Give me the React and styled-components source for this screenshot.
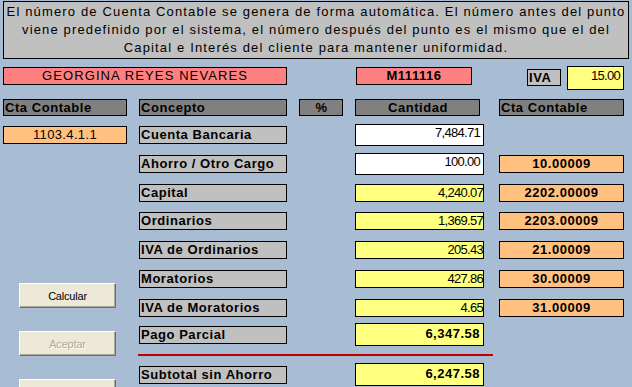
import React from "react";
import styled, { createGlobalStyle, css } from "styled-components";

const rows = [
  { concept: "Cuenta Bancaria", amount: "7,484.71", tone: "white", kind: "edit", left: "1103.4.1.1" },
  { concept: "Ahorro / Otro Cargo", amount: "100.00", tone: "white", kind: "edit", account: "10.00009" },
  { concept: "Capital", amount: "4,240.07", account: "2202.00009" },
  { concept: "Ordinarios", amount: "1,369.57", account: "2203.00009" },
  { concept: "IVA de Ordinarios", amount: "205.43", account: "21.00009" },
  { concept: "Moratorios", amount: "427.86", account: "30.00009" },
  { concept: "IVA de Moratorios", amount: "4.65", account: "31.00009" },
  { concept: "Pago Parcial", amount: "6,347.58", kind: "total" },
];

function App() {
  return (
    <>
      <GlobalStyle />
      <Page>
        <Notice>
          El número de Cuenta Contable se genera de forma automática. El número antes del punto
          <br />
          viene predefinido por el sistema, el número después del punto es el mismo que el del
          <br />
          Capital e Interés del cliente para mantener uniformidad.
        </Notice>

        <Form>
          <NameField>GEORGINA REYES NEVARES</NameField>
          <CodeField>M111116</CodeField>
          <IvaGroup>
            <IvaLabel>IVA</IvaLabel>
            <IvaInput>15.00</IvaInput>
          </IvaGroup>

          <HeaderCell $col={1}>Cta Contable</HeaderCell>
          <HeaderCell $col={2}>Concepto</HeaderCell>
          <HeaderCell $col={3} $center>%</HeaderCell>
          <HeaderCell $col={4} $center $narrow>Cantidad</HeaderCell>
          <HeaderCell $col={5}>Cta Contable</HeaderCell>

          {rows.map((r, i) => (
            <React.Fragment key={r.concept}>
              {r.left && (
                <AccountCell $row={i + 3} $col={1}>
                  {r.left}
                </AccountCell>
              )}
              <ConceptLabel $row={i + 3}>{r.concept}</ConceptLabel>
              <AmountField $row={i + 3} $tone={r.tone} $kind={r.kind}>
                {r.amount}
              </AmountField>
              {r.account && (
                <AccountCell $row={i + 3} $col={5} $bold>
                  {r.account}
                </AccountCell>
              )}
            </React.Fragment>
          ))}

          <Divider />

          <ConceptLabel $row={12}>Subtotal sin Ahorro</ConceptLabel>
          <AmountField $row={12} $kind="total">
            6,247.58
          </AmountField>

          <ButtonStack>
            <Button>Calcular</Button>
            <Button disabled>Aceptar</Button>
            <Button>Cancelar</Button>
          </ButtonStack>
        </Form>
      </Page>
    </>
  );
}

const GlobalStyle = createGlobalStyle`
  html, body {
    margin: 0;
    background: #a8bcd4;
    overflow: hidden;
  }
  body {
    font-family: "Liberation Sans", Arial, sans-serif;
    color: #000;
  }
`;

const Page = styled.div`
  height: 387px;
  box-sizing: border-box;
  padding: 1px 3px 0;
  overflow: hidden;
`;

const Notice = styled.div`
  height: 55px;
  border: 1px solid #000;
  background: #c0c0c0;
  padding-top: 1px;
  text-align: center;
  white-space: nowrap;
  font-size: 13px;
  line-height: 18px;
  letter-spacing: 1.15px;
`;

const Form = styled.div`
  display: grid;
  grid-template-columns: 124px 148px 44px 132px 125px;
  grid-template-rows: 33px 27px 29px 29px 28px 29px 29px 29px 27px 28px 12px auto;
  column-gap: 12px;
  align-items: start;
  margin-top: 7px;
`;

const field = css`
  box-sizing: border-box;
  border: 1px solid #000;
  height: 18px;
  line-height: 16px;
  font-size: 13px;
  white-space: nowrap;
  overflow: hidden;
`;

const NameField = styled.div`
  ${field};
  grid-row: 1;
  grid-column: 1 / 3;
  margin-top: 1px;
  background: #ff8080;
  text-align: center;
  letter-spacing: 1.1px;
`;

const CodeField = styled.div`
  ${field};
  grid-row: 1;
  grid-column: 4;
  width: 116px;
  margin: 1px 0 0 1px;
  background: #ff8080;
  text-align: center;
  font-weight: bold;
  letter-spacing: 0.55px;
`;

const IvaGroup = styled.div`
  grid-row: 1;
  grid-column: 5;
  display: flex;
  justify-content: flex-end;
  align-items: flex-start;
  gap: 6px;
`;

const IvaLabel = styled.div`
  ${field};
  height: 17px;
  line-height: 15px;
  width: 34px;
  margin-top: 3px;
  padding-left: 1px;
  background: #c0c0c0;
  font-weight: bold;
  letter-spacing: 0.55px;
`;

const IvaInput = styled.div`
  ${field};
  height: 24px;
  width: 57px;
  padding: 1px 3px 0 0;
  background: #ffff80;
  text-align: right;
  letter-spacing: -0.7px;
`;

const HeaderCell = styled.div`
  ${field};
  grid-row: 2;
  grid-column: ${(p) => p.$col};
  height: 17px;
  line-height: 15px;
  width: ${(p) => (p.$narrow ? "125px" : "auto")};
  padding-left: 1px;
  background: #808080;
  font-weight: bold;
  letter-spacing: 0.55px;
  text-align: ${(p) => (p.$center ? "center" : "left")};
`;

const ConceptLabel = styled.div`
  ${field};
  grid-row: ${(p) => p.$row};
  grid-column: 2;
  padding-left: 1px;
  background: #c0c0c0;
  font-weight: bold;
  letter-spacing: 0.55px;
`;

const amountSizes = {
  plain: css`
    height: 18px;
    padding-right: 0;
  `,
  edit: css`
    height: 22px;
    margin-top: -2px;
    padding-right: 3px;
  `,
  total: css`
    height: 23px;
    line-height: 20px;
    margin-top: -3px;
    padding-right: 3px;
    font-weight: bold;
    letter-spacing: 0.5px;
  `,
};

const AmountField = styled.div`
  ${field};
  grid-row: ${(p) => p.$row};
  grid-column: 4;
  width: 129px;
  background: ${(p) => (p.$tone === "white" ? "#ffffff" : "#ffff80")};
  text-align: right;
  letter-spacing: -0.7px;
  ${(p) => amountSizes[p.$kind || "plain"]};
`;

const AccountCell = styled.div`
  ${field};
  grid-row: ${(p) => p.$row};
  grid-column: ${(p) => p.$col};
  background: #ffc080;
  text-align: center;
  font-weight: ${(p) => (p.$bold ? "bold" : "normal")};
  letter-spacing: ${(p) => (p.$bold ? "0.55px" : "0.35px")};
`;

const Divider = styled.div`
  grid-row: 11;
  grid-column: 2 / 5;
  width: 355px;
  height: 2px;
  margin-left: -1px;
  background: #c00000;
`;

const ButtonStack = styled.div`
  grid-row: 8 / 13;
  grid-column: 1;
  display: flex;
  flex-direction: column;
  gap: 23px;
  padding: 13px 0 0 16px;
`;

const Button = styled.button`
  box-sizing: border-box;
  width: 97px;
  height: 25px;
  padding: 0;
  background: #ece9d8;
  border: 1px solid;
  border-color: #ffffff #716f64 #716f64 #ffffff;
  box-shadow: inset -1px -1px 0 #aca899;
  font-family: "Liberation Sans", Arial, sans-serif;
  font-size: 11px;
  letter-spacing: -0.2px;
  color: #000;

  &:disabled {
    color: #aca899;
    text-shadow: 1px 1px 0 #ffffff;
  }
`;

export default App;
